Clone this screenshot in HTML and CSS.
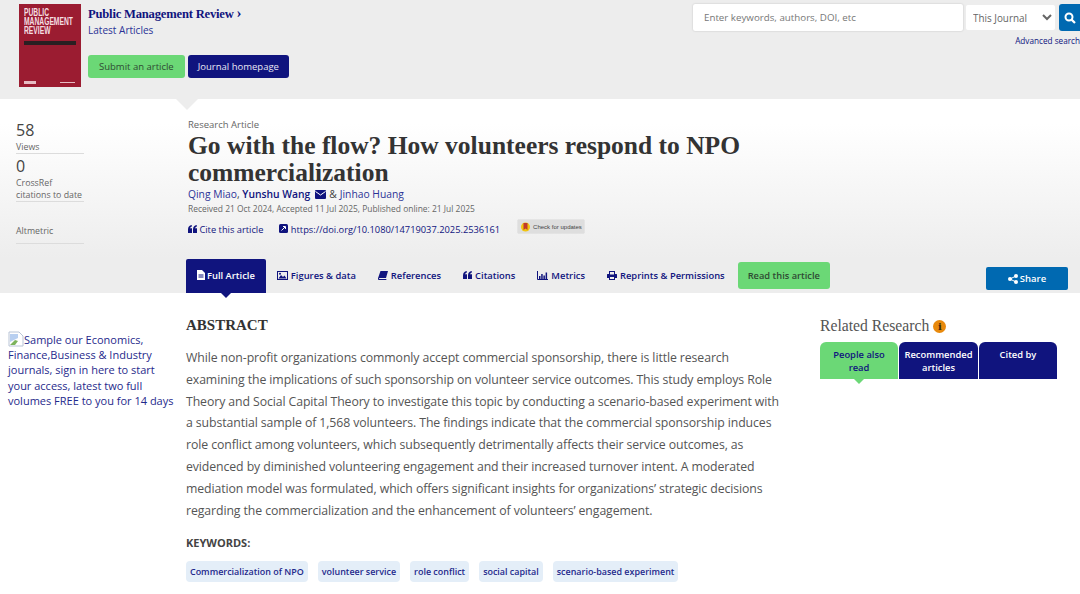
FILE: index.html
```html
<!DOCTYPE html>
<html lang="en">
<head>
    <meta charset="UTF-8">
    <meta name="viewport" content="width=device-width, initial-scale=1.0">
    <title>Go with the flow? How volunteers respond to NPO commercialization</title>
    <link rel="stylesheet" href="styles.css">
</head>
<body>

    <!-- Journal banner -->
    <header class="banner">
        <div class="cover">
            <div class="cover-title">PUBLIC<br>MANAGEMENT<br>REVIEW</div>
            <div class="cover-strip"></div>
            <div class="cover-foot"><span class="cover-logo"></span><span class="cover-line"></span></div>
        </div>
        <div class="journal">
            <a class="journal-name">Public Management Review <span class="chev">&#8250;</span></a>
            <a class="journal-sub">Latest Articles</a>
            <div class="journal-btns">
                <a class="btn btn-green">Submit an article</a>
                <a class="btn btn-navy">Journal homepage</a>
            </div>
        </div>
        <div class="search">
            <div class="search-row">
                <input class="search-input" type="text" placeholder="Enter keywords, authors, DOI, etc">
                <select class="search-select"><option>This Journal</option></select>
                <button class="search-btn" aria-label="Search">
                    <svg width="12" height="12" viewBox="0 0 12 12"><circle cx="5" cy="5" r="3.500" fill="none" stroke="#fff" stroke-width="2"/><path d="M7.600 7.600 11 11" stroke="#fff" stroke-width="2.200"/></svg>
                </button>
            </div>
            <a class="advanced">Advanced search</a>
        </div>
    </header>

    <!-- Article head -->
    <section class="article-head">
        <span class="notch"></span>
        <aside class="stats">
            <div class="stat">
                <div class="stat-num">58</div>
                <div class="stat-label">Views</div>
            </div>
            <div class="stat">
                <div class="stat-num">0</div>
                <div class="stat-label">CrossRef<br>citations to date</div>
            </div>
            <div class="stat stat-alt">
                <div class="stat-label">Altmetric</div>
            </div>
        </aside>
        <div class="head-main">
            <div class="art-type">Research Article</div>
            <h1 class="art-title">Go with the flow? How volunteers respond to NPO commercialization</h1>
            <div class="authors">
                <a>Qing Miao</a>, <a class="corr">Yunshu Wang</a>
                <svg class="mail" width="11" height="9" viewBox="0 0 11 9"><rect width="11" height="9" rx="1" fill="#10147e"/><path d="M0.500 1.500 5.500 5l5-3.500" fill="none" stroke="#fff" stroke-width="1"/></svg>
                <span class="amp">&amp;</span> <a>Jinhao Huang</a>
            </div>
            <div class="dates">Received 21 Oct 2024, Accepted 11 Jul 2025, Published online: 21 Jul 2025</div>
            <div class="links">
                <a class="link-cite">
                    <svg width="9" height="8" viewBox="0 0 9 8"><path d="M0 4.500C0 2 1.200.5 3.800 0v1.500C2.800 1.800 2.200 2.400 2 3.300h2V8H0zM5 4.500C5 2 6.200.5 8.800 0v1.500C7.800 1.800 7.200 2.400 7 3.300h2V8H5z" fill="#10147e"/></svg>
                    Cite this article
                </a>
                <a class="link-doi">
                    <svg width="9" height="9" viewBox="0 0 9 9"><rect width="9" height="9" rx="1.500" fill="#10147e"/><path d="M2.500 6.500 6 3M4 2.500h2.500V5" fill="none" stroke="#fff" stroke-width="1"/></svg>
                    https://doi.org/10.1080/14719037.2025.2536161
                </a>
                <span class="updates">
                    <svg width="9" height="10" viewBox="0 0 9 10"><circle cx="4.500" cy="5" r="4.500" fill="#f1c40f"/><path d="M2.500 1h4v7L4.500 6.500 2.500 8z" fill="#c0392b"/></svg>
                    Check for updates
                </span>
            </div>
        </div>
    </section>

    <!-- Tabs -->
    <nav class="tabs">
        <a class="tab tab-active">
            <svg width="8" height="10" viewBox="0 0 8 10"><path d="M0 0h5l3 3v7H0z" fill="#fff"/><path d="M1.500 5h5M1.500 7h5" stroke="#10147e"/></svg>
            Full Article
        </a>
        <a class="tab">
            <svg width="11" height="9" viewBox="0 0 11 9"><rect x=".5" y=".5" width="10" height="8" fill="none" stroke="#10147e"/><path d="M1.500 7.500 4 4l2 2 1.500-1.500 2 3z" fill="#10147e"/><circle cx="3" cy="2.800" r="1" fill="#10147e"/></svg>
            Figures &amp; data
        </a>
        <a class="tab">
            <svg width="10" height="9" viewBox="0 0 10 9"><path d="M2.500 0H10L8 7H1.500C.8 7 .8 8 1.500 8H8.500L8.200 9H1C0 9 -.2 8 .1 7z" fill="#10147e"/></svg>
            References
        </a>
        <a class="tab">
            <svg width="9" height="8" viewBox="0 0 9 8"><path d="M0 4.500C0 2 1.200.5 3.800 0v1.500C2.800 1.800 2.200 2.400 2 3.300h2V8H0zM5 4.500C5 2 6.200.5 8.800 0v1.500C7.800 1.800 7.200 2.400 7 3.300h2V8H5z" fill="#10147e"/></svg>
            Citations
        </a>
        <a class="tab">
            <svg width="11" height="9" viewBox="0 0 11 9"><path d="M.5 0v8.500H11" fill="none" stroke="#10147e"/><path d="M2 5h1.500v3H2zM4.200 3h1.500v5H4.200zM6.400 4.500h1.500V8H6.400zM8.600 1.500h1.500V8H8.600z" fill="#10147e"/></svg>
            Metrics
        </a>
        <a class="tab">
            <svg width="10" height="9" viewBox="0 0 10 9"><path d="M2 3V0h6v3h1.500c.3 0 .5.200.5.500V7H8v2H2V7H0V3.500c0-.3.200-.5.500-.5zM3 1v2.500h4V1zM3 6v2h4V6z" fill="#10147e" fill-rule="evenodd"/></svg>
            Reprints &amp; Permissions
        </a>
        <a class="btn btn-green btn-read">Read this article</a>
        <a class="btn-share">
            <svg width="10" height="10" viewBox="0 0 10 10"><circle cx="2" cy="5" r="2" fill="#fff"/><circle cx="8" cy="2" r="2" fill="#fff"/><circle cx="8" cy="8" r="2" fill="#fff"/><path d="M8 2 2 5l6 3" fill="none" stroke="#fff"/></svg>
            Share
        </a>
    </nav>

    <!-- Main content -->
    <main class="content">
        <div class="promo">
            <a>
                <svg class="broken" width="16" height="16" viewBox="0 0 16 16"><path d="M1 1h10l4 4v10H1z" fill="#fff" stroke="#b9c4d6"/><path d="M2 3h8v4L2 11z" fill="#b8cff0"/><path d="M2 14l5-5 3 1-3 4z" fill="#7cb35c"/></svg>Sample our Economics, Finance,Business &amp; Industry journals, sign in here to start your access, latest two full volumes FREE to you for 14 days
            </a>
        </div>
        <article class="abstract">
            <h2 class="abstract-title">ABSTRACT</h2>
            <p class="abstract-text">While non-profit organizations commonly accept commercial sponsorship, there is little research examining the implications of such sponsorship on volunteer service outcomes. This study employs Role Theory and Social Capital Theory to investigate this topic by conducting a scenario-based experiment with a substantial sample of 1,568 volunteers. The findings indicate that the commercial sponsorship induces role conflict among volunteers, which subsequently detrimentally affects their service outcomes, as evidenced by diminished volunteering engagement and their increased turnover intent. A moderated mediation model was formulated, which offers significant insights for organizations&rsquo; strategic decisions regarding the commercialization and the enhancement of volunteers&rsquo; engagement.</p>
            <div class="kw-title">KEYWORDS:</div>
            <div class="kw-list">
                <a class="kw">Commercialization of NPO</a>
                <a class="kw">volunteer service</a>
                <a class="kw">role conflict</a>
                <a class="kw">social capital</a>
                <a class="kw">scenario-based experiment</a>
            </div>
        </article>
        <aside class="related">
            <h3 class="related-title">Related Research <span class="info">i</span></h3>
            <div class="related-tabs">
                <a class="rtab rtab-active">People also read</a>
                <a class="rtab rtab-wide">Recommended articles</a>
                <a class="rtab">Cited by</a>
            </div>
        </aside>
    </main>

</body>
</html>
```

FILE: styles.css
```css
body {
    margin: 0;
    height: 594px;
    overflow: hidden;
    background: #fff;
    color: #444;
    font-family: "Open Sans", Arial, sans-serif;
}

a {
    color: #10147e;
    text-decoration: none;
}

/* Banner */
.banner {
    display: flex;
    height: 99px;
    box-sizing: border-box;
    padding: 4px 0 0 19px;
    background: #ededed;
}

.cover {
    display: flex;
    flex-direction: column;
    width: 62px;
    height: 83px;
    box-sizing: border-box;
    padding: 4px 6px 3px 5px;
    background: #9b1c31;
    color: #f4dfe2;
}

.cover-title {
    width: 80px;
    font-family: "Liberation Sans", Arial, sans-serif;
    font-size: 10.500px;
    font-weight: bold;
    line-height: 9px;
    white-space: nowrap;
    transform: scaleX(.64);
    transform-origin: left top;
}

.cover-strip {
    height: 4px;
    margin: 6px -1px 0 0;
    background: #2a1f22;
}

.cover-foot {
    display: flex;
    justify-content: space-between;
    align-items: center;
    margin-top: auto;
}

.cover-logo {
    width: 12px;
    height: 3px;
    background: #e7bcc3;
}

.cover-line {
    width: 15px;
    height: 1px;
    background: #e7bcc3;
}

.journal {
    display: flex;
    flex-direction: column;
    margin-left: 7px;
}

.journal-name {
    font-family: "Liberation Serif", serif;
    font-size: 12.600px;
    font-weight: bold;
    letter-spacing: -.2px;
    line-height: 19px;
}

.chev {
    font-size: 15px;
}

.journal-sub {
    font-size: 10.050px;
    line-height: 13px;
    color: #2b3396;
}

.journal-btns {
    display: flex;
    gap: 3px;
    margin-top: 18px;
}

.btn {
    display: block;
    padding: 0 10px;
    border-radius: 3px;
    font-size: 9.500px;
    line-height: 23px;
}

.btn-green {
    padding: 0 11px;
    background: #6bd876;
    color: #2f4a33;
}

.btn-navy {
    background: #10147e;
    color: #e8e8f4;
}

.search {
    display: flex;
    flex-direction: column;
    align-items: flex-end;
    margin-left: auto;
}

.search-row {
    display: flex;
    align-items: center;
    gap: 3px;
}

.search-input {
    width: 270px;
    height: 27px;
    box-sizing: border-box;
    padding: 0 11px;
    border: 0;
    border-radius: 2px;
    background: #fff;
    box-shadow: 0 0 2px rgba(0, 0, 0, .2);
    font-family: "Open Sans", Arial, sans-serif;
    font-size: 9.750px;
}

.search-input::placeholder {
    color: #777;
}

.search-select {
    width: 89px;
    height: 25px;
    border: 0;
    border-radius: 2px;
    padding: 0 0 0 3px;
    background: #fff;
    color: #666;
    font-family: "Open Sans", Arial, sans-serif;
    font-size: 9.900px;
}

.search-btn {
    display: flex;
    justify-content: center;
    align-items: center;
    width: 21px;
    height: 27px;
    margin-left: 1px;
    padding: 0;
    border: 0;
    border-radius: 3px 0 0 3px;
    background: #0069b1;
}

.advanced {
    margin-top: 4px;
    font-size: 8.200px;
    line-height: 12px;
}

/* Article head */
.article-head {
    position: relative;
    display: flex;
    height: 159px;
    background: linear-gradient(to bottom, #fff 0, #fff 25px, #ededed 100%);
}

.notch {
    position: absolute;
    top: 0;
    left: 176px;
    width: 0;
    height: 0;
    border-left: 11px solid transparent;
    border-right: 11px solid transparent;
    border-top: 11px solid #ededed;
}

.stats {
    width: 68px;
    margin-left: 16px;
    padding-top: 21px;
    color: #666;
}

.stat {
    margin-bottom: 2px;
    border-bottom: 1px solid #dcdcdc;
}

.stat-alt {
    margin-top: 22px;
    padding-bottom: 6px;
}

.stat-num {
    font-size: 16px;
    line-height: 20px;
    color: #444;
}

.stat-label {
    position: relative;
    top: 1px;
    padding-bottom: 1px;
    font-size: 8.800px;
    line-height: 12px;
}

.head-main {
    margin-left: 104px;
    padding-top: 19px;
}

.art-type {
    font-size: 9.500px;
    line-height: 13px;
    color: #666;
}

.art-title {
    width: 600px;
    margin: 1px 0 0;
    font-family: "Liberation Serif", serif;
    font-size: 25.500px;
    font-weight: bold;
    line-height: 27px;
    color: #333;
}

.authors {
    display: flex;
    align-items: center;
    margin-top: 1px;
    font-size: 10.300px;
    line-height: 15px;
    white-space: pre;
    color: #444;
}

.authors a {
    color: #2b3396;
}

.authors .corr {
    color: #10147e;
    font-weight: 600;
}

.mail {
    margin: 0 3px 0 5px;
}

.amp {
    margin-right: 3px;
}

.dates {
    font-size: 8.450px;
    line-height: 13px;
    color: #666;
}

.links {
    display: flex;
    align-items: flex-start;
    margin-top: 8px;
    font-size: 9.300px;
    line-height: 14px;
}

.link-cite {
    margin-right: 16px;
}

.link-doi {
    margin-right: 18px;
}

.updates {
    display: inline-flex;
    align-items: center;
    gap: 3px;
    height: 13px;
    margin-top: -3px;
    padding: 0 2px 0 3px;
    background: #dedede;
    box-shadow: 0 0 1px rgba(0, 0, 0, .3);
    font-family: "Liberation Sans", Arial, sans-serif;
    font-size: 6px;
    color: #444;
    white-space: nowrap;
}

/* Tabs */
.tabs {
    display: flex;
    align-items: flex-end;
    height: 35px;
    padding-left: 186px;
    background: #ededed;
}

.tab {
    position: relative;
    display: flex;
    align-items: center;
    gap: 3px;
    height: 34px;
    box-sizing: border-box;
    padding: 0 11px 2px;
    font-size: 9.400px;
    font-weight: 600;
    white-space: nowrap;
}

.tab-active {
    gap: 2px;
    border-radius: 2px 2px 0 0;
    background: #10147e;
    color: #fff;
}

.tab-active::after {
    content: "";
    position: absolute;
    top: 100%;
    left: 35px;
    border-left: 5px solid transparent;
    border-right: 5px solid transparent;
    border-top: 5px solid #10147e;
}

.btn-read {
    align-self: flex-start;
    margin: 4px 0 0 2px;
    padding: 0 10px;
    font-size: 9.300px;
    font-weight: 600;
    line-height: 27px;
}

.btn-share {
    display: flex;
    justify-content: center;
    align-items: center;
    gap: 2px;
    align-self: flex-start;
    width: 82px;
    height: 23px;
    margin: 9px 12px 0 auto;
    border-radius: 2px;
    background: #0069b1;
    color: #fff;
    font-size: 9.500px;
    font-weight: 600;
}

/* Main */
.content {
    display: flex;
    align-items: flex-start;
}

.promo {
    width: 170px;
    flex: none;
    margin: 38px 0 0 8px;
    font-size: 11px;
    line-height: 15.200px;
}

.promo a {
    color: #1f2a8c;
}

.broken {
    vertical-align: -3px;
}

.abstract {
    width: 600px;
    flex: none;
    margin-left: 8px;
}

.abstract-title {
    margin: 23px 0 0;
    font-family: "Liberation Serif", serif;
    font-size: 15px;
    font-weight: bold;
    line-height: 18px;
    color: #333;
}

.abstract-text {
    margin: 13px 0 0;
    font-size: 12.300px;
    letter-spacing: -.1px;
    line-height: 21.800px;
    color: #555;
}

.kw-title {
    margin-top: 14px;
    font-size: 11px;
    font-weight: 700;
    line-height: 15px;
    color: #444;
}

.kw-list {
    display: flex;
    gap: 10px;
    margin-top: 11px;
}

.kw {
    padding: 0 4px;
    border-radius: 4px;
    background: #e4eef8;
    font-size: 8.950px;
    font-weight: 600;
    line-height: 21px;
    white-space: nowrap;
    color: #1f2a8c;
}

.related {
    width: 237px;
    flex: none;
    margin-left: 34px;
}

.related-title {
    display: flex;
    align-items: center;
    gap: 4px;
    margin: 24px 0 0;
    font-family: "Liberation Serif", serif;
    font-size: 15.700px;
    font-weight: normal;
    line-height: 18px;
    color: #555;
}

.info {
    width: 13px;
    height: 13px;
    border-radius: 50%;
    background: #e8890c;
    font-family: "DejaVu Serif", serif;
    font-size: 10px;
    font-weight: bold;
    line-height: 13px;
    text-align: center;
    color: #3a2a0a;
}

.related-tabs {
    display: flex;
    gap: 1px;
    margin-top: 7px;
}

.rtab {
    position: relative;
    width: 78px;
    height: 37px;
    box-sizing: border-box;
    padding: 6px 4px 0;
    border-radius: 6px 6px 0 0;
    background: #10147e;
    color: #fff;
    font-size: 9.400px;
    font-weight: 600;
    line-height: 13px;
    text-align: center;
}

.rtab-wide {
    width: 79px;
}

.rtab-active {
    background: #6bd876;
    color: #10147e;
}

.rtab-active::after {
    content: "";
    position: absolute;
    top: 100%;
    left: 34px;
    border-left: 5px solid transparent;
    border-right: 5px solid transparent;
    border-top: 5px solid #6bd876;
}
```
